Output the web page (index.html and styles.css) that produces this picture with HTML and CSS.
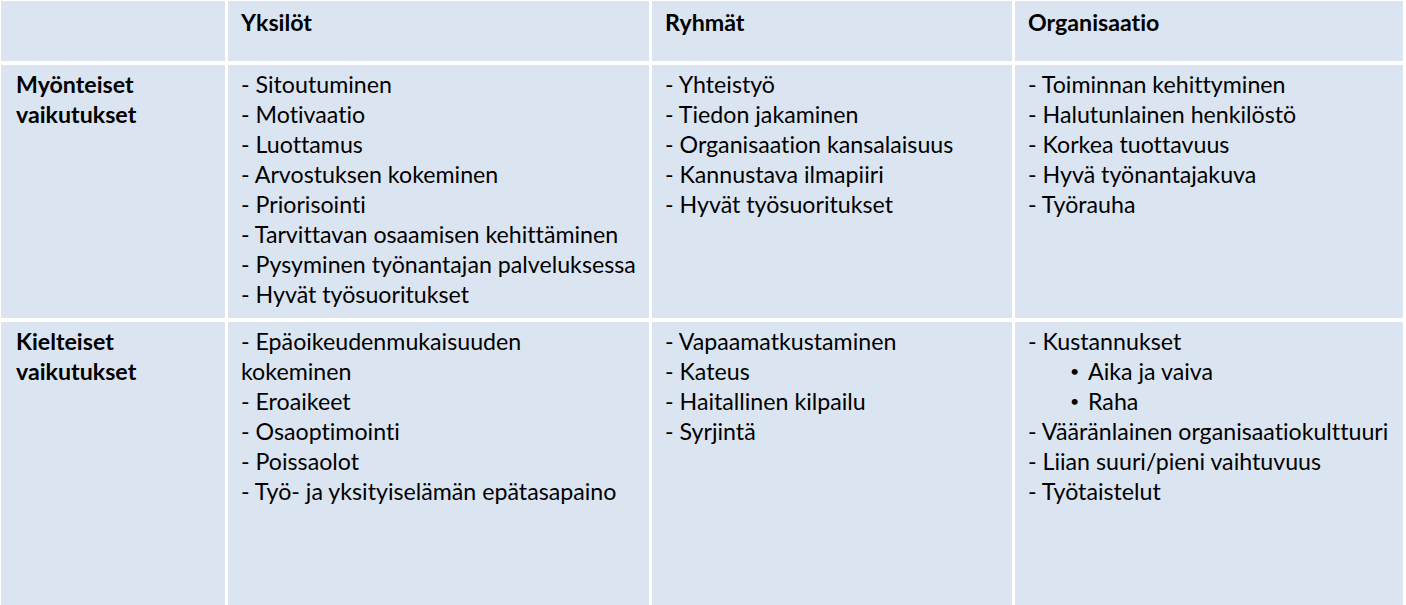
FILE: index.html
```html
<!DOCTYPE html>
<html lang="fi">
<head>
<meta charset="utf-8">
<title>Vaikutukset</title>
<link rel="stylesheet" href="styles.css">
</head>
<body>
<div class="table">
  <div class="cell head"></div>
  <div class="cell head"><span class="b">Yksilöt</span></div>
  <div class="cell head"><span class="b">Ryhmät</span></div>
  <div class="cell head"><span class="b">Organisaatio</span></div>

  <div class="cell label"><span class="b">Myönteiset<br>vaikutukset</span></div>
  <div class="cell">
    <div class="ln">- Sitoutuminen</div>
    <div class="ln">- Motivaatio</div>
    <div class="ln">- Luottamus</div>
    <div class="ln">- Arvostuksen kokeminen</div>
    <div class="ln">- Priorisointi</div>
    <div class="ln">- Tarvittavan osaamisen kehittäminen</div>
    <div class="ln">- Pysyminen työnantajan palveluksessa</div>
    <div class="ln">- Hyvät työsuoritukset</div>
  </div>
  <div class="cell">
    <div class="ln">- Yhteistyö</div>
    <div class="ln">- Tiedon jakaminen</div>
    <div class="ln">- Organisaation kansalaisuus</div>
    <div class="ln">- Kannustava ilmapiiri</div>
    <div class="ln">- Hyvät työsuoritukset</div>
  </div>
  <div class="cell">
    <div class="ln">- Toiminnan kehittyminen</div>
    <div class="ln">- Halutunlainen henkilöstö</div>
    <div class="ln">- Korkea tuottavuus</div>
    <div class="ln">- Hyvä työnantajakuva</div>
    <div class="ln">- Työrauha</div>
  </div>

  <div class="cell label"><span class="b">Kielteiset<br>vaikutukset</span></div>
  <div class="cell">
    <div class="ln">- Epäoikeudenmukaisuuden<br>kokeminen</div>
    <div class="ln">- Eroaikeet</div>
    <div class="ln">- Osaoptimointi</div>
    <div class="ln">- Poissaolot</div>
    <div class="ln">- Työ- ja yksityiselämän epätasapaino</div>
  </div>
  <div class="cell">
    <div class="ln">- Vapaamatkustaminen</div>
    <div class="ln">- Kateus</div>
    <div class="ln">- Haitallinen kilpailu</div>
    <div class="ln">- Syrjintä</div>
  </div>
  <div class="cell">
    <div class="ln">- Kustannukset</div>
    <div class="ln sub"><span class="dot">•</span>Aika ja vaiva</div>
    <div class="ln sub"><span class="dot">•</span>Raha</div>
    <div class="ln">- Vääränlainen organisaatiokulttuuri</div>
    <div class="ln">- Liian suuri/pieni vaihtuvuus</div>
    <div class="ln">- Työtaistelut</div>
  </div>
</div>
</body>
</html>
```

FILE: styles.css
```css
html, body {
  margin: 0;
  padding: 0;
  background: #ffffff;
}

body {
  width: 1406px;
  height: 605px;
  overflow: hidden;
  font-family: Lato, "Liberation Sans", sans-serif;
  font-size: 23.2px;
  font-variant-ligatures: none;
  color: #000;
}

.table {
  display: grid;
  grid-template-columns: 224px 421px 360px 388px;
  grid-template-rows: 60px 253px 283px;
  column-gap: 3px;
  row-gap: 4px;
  padding: 1px 3px 0 1px;
  height: 604px;
  box-sizing: border-box;
}

.cell {
  background: #dbe5f1;
  padding: 4px 6px 0 13px;
  line-height: 30px;
}

.cell.head {
  padding-top: 6px;
}

.cell.label {
  padding-left: 15px;
}

.b {
  font-weight: 700;
}

.ln {
  white-space: nowrap;
}

.sub {
  padding-left: 36px;
  display: flex;
}

.dot {
  width: 18px;
  flex: none;
  font-size: 16px;
  padding-left: 6px;
}
```
